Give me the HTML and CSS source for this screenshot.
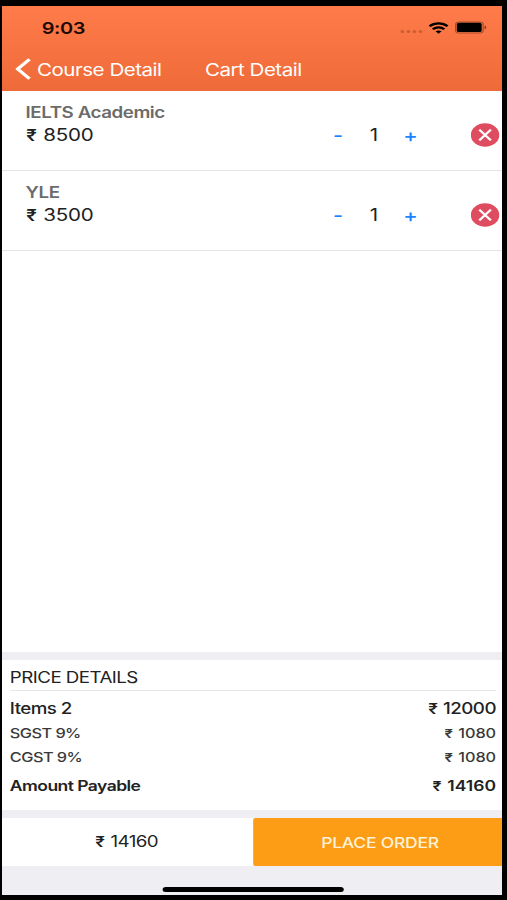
FILE: index.html
```html
<!DOCTYPE html>
<html lang="en">
<head>
    <meta charset="UTF-8">
    <meta name="viewport" content="width=device-width, initial-scale=1.0">
    <title>Cart Detail</title>
    <link rel="stylesheet" href="styles.css">
</head>
<body>
    <div class="phone">
        <header class="header">
            <div class="status-bar">
                <span class="time">9:03</span>
                <div class="status-icons">
                    <span class="signal"><i></i><i></i><i></i><i></i></span>
                    <svg class="wifi" width="17" height="12" viewBox="0 0 17 12" fill="none" stroke="#000" stroke-width="2.2">
                        <path d="M1 4.3C5.2 0.3 11.8 0.3 16 4.3" />
                        <path d="M3.7 7.3C6.5 4.8 10.5 4.8 13.3 7.3" />
                        <path d="M6 9.3C7.5 8.1 9.5 8.1 11 9.3L8.5 11.8Z" fill="#000" stroke="none" />
                    </svg>
                    <svg class="battery" width="27" height="13" viewBox="0 0 27 13">
                        <rect x="0.6" y="0.9" width="22.8" height="11.2" rx="2.8" fill="none" stroke="#000" stroke-opacity="0.35" />
                        <rect x="1.6" y="1.8" width="20.6" height="9.2" rx="1.6" fill="#000" />
                        <path d="M24.6 4.6C26.4 5.3 26.4 7.7 24.6 8.4Z" fill="#000" fill-opacity="0.5" />
                    </svg>
                </div>
            </div>
            <nav class="nav-bar">
                <a class="back">
                    <svg width="13" height="22" viewBox="0 0 13 22" fill="none" stroke="#fff" stroke-width="3">
                        <path d="M11.8 1.3L2 11L11.8 20.7" />
                    </svg>
                    <span>Course Detail</span>
                </a>
                <span class="title">Cart Detail</span>
            </nav>
        </header>

        <main class="cart">
            <div class="cart-item">
                <div class="name">IELTS Academic</div>
                <div class="item-row">
                    <span class="price"><span class="rupee">₹</span> 8500</span>
                    <span class="minus">-</span>
                    <span class="qty">1</span>
                    <span class="plus">+</span>
                    <svg class="remove" width="24" height="24" viewBox="0 0 24 24">
                        <circle cx="12" cy="12" r="11.8" fill="#e04c5f" />
                        <path d="M7.2 6.6L16.8 17.4M16.8 6.6L7.2 17.4" stroke="#fff" stroke-width="2.1" />
                    </svg>
                </div>
            </div>
            <div class="cart-item">
                <div class="name">YLE</div>
                <div class="item-row">
                    <span class="price"><span class="rupee">₹</span> 3500</span>
                    <span class="minus">-</span>
                    <span class="qty">1</span>
                    <span class="plus">+</span>
                    <svg class="remove" width="24" height="24" viewBox="0 0 24 24">
                        <circle cx="12" cy="12" r="11.8" fill="#e04c5f" />
                        <path d="M7.2 6.6L16.8 17.4M16.8 6.6L7.2 17.4" stroke="#fff" stroke-width="2.1" />
                    </svg>
                </div>
            </div>
        </main>

        <section class="price-details">
            <h2>PRICE DETAILS</h2>
            <div class="line items"><span>Items 2</span><span><span class="rupee">₹</span> 12000</span></div>
            <div class="line tax"><span>SGST 9%</span><span class="amount"><span class="rupee">₹</span> 1080</span></div>
            <div class="line tax"><span>CGST 9%</span><span class="amount"><span class="rupee">₹</span> 1080</span></div>
            <div class="line total"><span>Amount Payable</span><span class="amount"><span class="rupee">₹</span> 14160</span></div>
        </section>

        <footer class="footer">
            <div class="footer-total"><span class="rupee">₹</span> 14160</div>
            <button class="place-order">PLACE ORDER</button>
        </footer>
        <div class="home-bar"></div>
    </div>
</body>
</html>
```
FILE: styles.css
```css
* {
    box-sizing: border-box;
}
body {
    margin: 0;
    padding: 6px 0 0 2px;
    height: 900px;
    background: #000;
    font-family: Inter, "Liberation Sans", sans-serif;
    overflow: hidden;
}
/* 414pt wide screen stretched to 500px */
.phone {
    display: flex;
    flex-direction: column;
    width: 414px;
    height: 889px;
    background: #efeff3;
    color: #222;
    transform: scaleX(1.2077);
    transform-origin: 0 0;
}
.header {
    height: 85px;
    background: linear-gradient(#ff7b49, #ee6a38);
}
.status-bar {
    display: flex;
    justify-content: space-between;
    align-items: center;
    height: 43px;
    padding: 0 12px 0 33px;
}
.time {
    font-size: 16.5px;
    font-weight: 600;
    letter-spacing: -0.4px;
    color: #1c0a04;
}
.status-icons {
    display: flex;
    align-items: center;
}
.signal {
    display: flex;
    gap: 2px;
    margin: 7px 5px 0 0;
}
.signal i {
    width: 3px;
    height: 3px;
    border-radius: 50%;
    background: #000;
    opacity: 0.2;
}
.wifi {
    margin-right: 5px;
}
.nav-bar {
    display: flex;
    align-items: center;
    height: 40px;
    padding-left: 11px;
    font-size: 17px;
    letter-spacing: -0.4px;
    color: #fff;
}
.nav-bar span {
    padding-top: 1px;
}
.back {
    display: flex;
    align-items: center;
    gap: 5px;
    width: 157px;
}
.cart {
    flex: 1;
    background: #fff;
}
.cart-item {
    height: 80px;
    padding: 11px 2px 0 19.5px;
    border-bottom: 1px solid #e3e5e6;
}
.name {
    font-size: 15.5px;
    font-weight: 600;
    line-height: 21px;
    letter-spacing: -0.35px;
    color: #6b6b6b;
}
.item-row {
    display: grid;
    grid-template-columns: 244px 29.5px 30px 30.5px 1fr;
    align-items: center;
    height: 24px;
    font-size: 17px;
    text-align: center;
}
.price {
    padding-left: 0.5px;
    letter-spacing: -0.2px;
    text-align: left;
}
.rupee {
    margin-right: 1px;
    font-size: 0.92em;
    font-weight: 600;
    line-height: 0;
}
.minus,
.plus {
    font-size: 18px;
    font-weight: 500;
    color: #1a84ff;
}
.remove {
    justify-self: end;
}
.price-details {
    height: 166px;
    padding: 8px 5px 0 6.5px;
    background: #fff;
    border-top: 8px solid #efeff3;
    border-bottom: 8px solid #efeff3;
}
.price-details h2 {
    height: 23px;
    margin: 0 0 6px;
    border-bottom: 1px solid #e6e6e6;
    font-size: 15.5px;
    font-weight: 400;
    line-height: 19px;
    letter-spacing: -0.45px;
}
.line {
    display: flex;
    justify-content: space-between;
    height: 24px;
    line-height: 24px;
    font-weight: 500;
}
.items {
    font-size: 15.5px;
    letter-spacing: -0.45px;
}
.tax {
    font-size: 13.5px;
    letter-spacing: -0.45px;
    color: #3a3a3a;
}
.tax .amount {
    letter-spacing: -0.1px;
}
.total {
    margin-top: 5px;
    font-size: 14.5px;
    font-weight: 600;
    letter-spacing: -0.45px;
}
.total .amount {
    letter-spacing: 0;
}
.footer {
    display: flex;
    height: 48px;
}
.footer-total {
    width: 208px;
    padding-right: 1.5px;
    background: #fff;
    font-size: 15.5px;
    line-height: 47px;
    letter-spacing: -0.45px;
    text-align: center;
}
.place-order {
    flex: 1;
    padding: 1px 0 0 4px;
    border: 0;
    border-radius: 2px 0 0 2px;
    background: #fd9d15;
    color: #fff2d8;
    font-family: inherit;
    font-size: 14.5px;
    font-weight: 500;
    letter-spacing: -0.2px;
}
.home-bar {
    width: 150px;
    height: 5px;
    margin: 21px 0 3px 133px;
    border-radius: 3px;
    background: #000;
}
```
